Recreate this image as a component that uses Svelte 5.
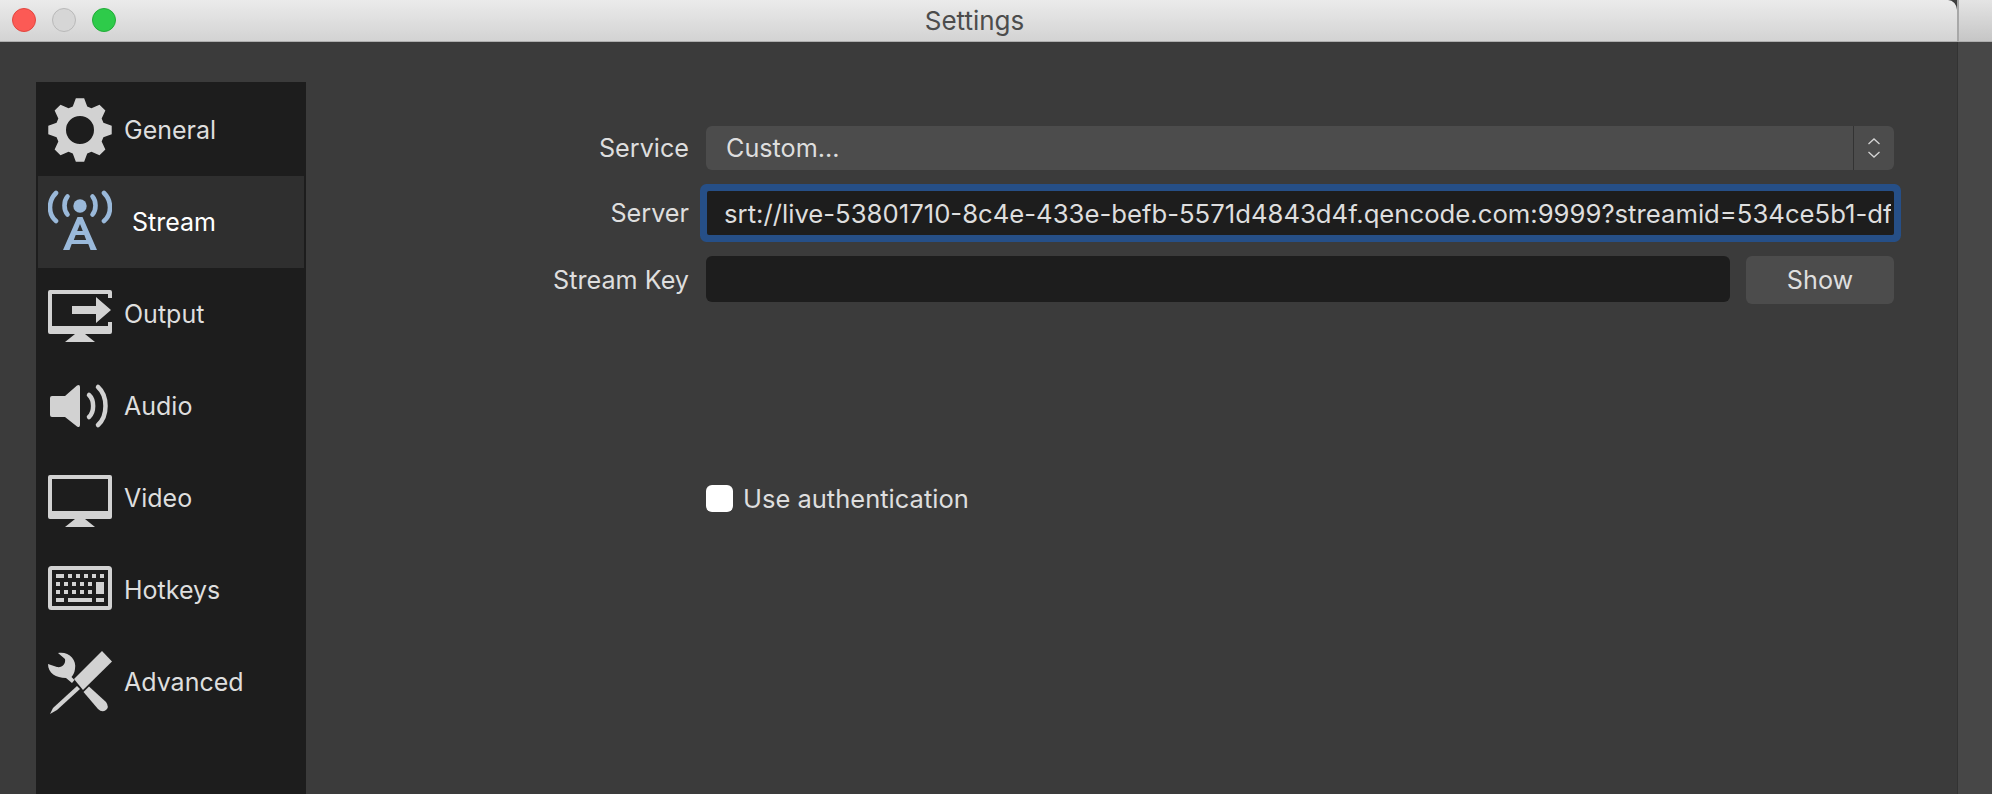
<script>
  const gear = (() => {
    const cx = 32, cy = 32, n = 8, pts = [];
    const pol = (r, a) => `${(cx + r * Math.sin(a)).toFixed(2)} ${(cy - r * Math.cos(a)).toFixed(2)}`;
    for (let i = 0; i < n; i++) {
      const a = (i * Math.PI * 2) / n;
      pts.push(pol(24.5, a - 0.3), pol(32, a - 0.13), pol(32, a + 0.13), pol(24.5, a + 0.3));
    }
    return 'M' + pts.join('L') + 'Z M46 32 A14 14 0 1 0 18 32 A14 14 0 1 0 46 32 Z';
  })();
  const keyRows = [
    [[8,16,8],[20,16,4],[28,16,4],[36,16,4],[44,16,4],[52,16,4]],
    [[8,24,4],[16,24,4],[24,24,4],[32,24,4],[40,24,4]],
    [[8,32,4],[16,32,4],[24,32,4],[32,32,4],[40,32,4]],
    [[8,40,8],[20,40,24],[48,40,8]]
  ].flat();
</script>

<div class="screen">
  <div class="window">
    <header class="titlebar">
      <div class="lights">
        <span class="light red"></span>
        <span class="light grey"></span>
        <span class="light green"></span>
      </div>
      <div class="title">Settings</div>
    </header>
    <div class="body">
      <nav class="sidebar">
        <div class="item">
          <svg viewBox="0 0 64 64" class="icon"><path fill-rule="evenodd" d={gear} /></svg>
          <span>General</span>
        </div>
        <div class="item active">
          <svg viewBox="0 0 64 64" class="icon stream">
            <circle cx="32" cy="16" r="6.7" />
            <g fill="none" stroke-width="4.6" stroke-linecap="round">
              <path d="M19.5 6.5C15.5 11 15.5 20 19.5 24.5" />
              <path d="M44.5 6.5C48.5 11 48.5 20 44.5 24.5" />
              <path d="M8 3C0 11 0 24 8 31" />
              <path d="M56 3C64 11 64 24 56 31" />
            </g>
            <path fill-rule="evenodd" d="M29.5 27H34.5L49 60H42.5L40.3 54H23.7L21.5 60H15ZM32 34L29.2 41H34.8ZM27.7 45L25.8 50H38.2L36.3 45Z" />
          </svg>
          <span class="active-label">Stream</span>
        </div>
        <div class="item">
          <svg viewBox="0 0 64 64" class="icon">
            <path fill-rule="evenodd" d="M2 8H62A2 2 0 0 1 64 10V50A2 2 0 0 1 62 52H37L47 60H17L27 52H2A2 2 0 0 1 0 50V10A2 2 0 0 1 2 8ZM4 12V44H60V12Z" />
            <rect class="cut" x="58" y="16" width="8" height="24" />
            <path d="M24 24H48V15L63 28L48 41V32H24Z" />
          </svg>
          <span>Output</span>
        </div>
        <div class="item">
          <svg viewBox="0 0 64 64" class="icon">
            <path d="M4 22H17L29 11.500Q32 10 32 13V51Q32 54 29 52.500L17 43H4Q2 43 2 41V24Q2 22 4 22Z" />
            <path d="M41 21C46.500 26 46.500 38 41 43" fill="none" stroke-width="4.500" stroke-linecap="round" />
            <path d="M50 13C60 22 60 42 50 51" fill="none" stroke-width="4.500" stroke-linecap="round" />
          </svg>
          <span>Audio</span>
        </div>
        <div class="item">
          <svg viewBox="0 0 64 64" class="icon">
            <path fill-rule="evenodd" d="M2 9H62A2 2 0 0 1 64 11V51A2 2 0 0 1 62 53H37L47 61H17L27 53H2A2 2 0 0 1 0 51V11A2 2 0 0 1 2 9ZM4 13V45H60V13Z" />
          </svg>
          <span>Video</span>
        </div>
        <div class="item">
          <svg viewBox="0 0 64 64" class="icon">
            <rect x="2" y="10" width="60" height="40" rx="1.500" fill="none" stroke-width="4" />
            {#each keyRows as k}
              <rect x={k[0]} y={k[1]} width={k[2]} height="4" />
            {/each}
            <rect x="48" y="24" width="8" height="12" />
          </svg>
          <span>Hotkeys</span>
        </div>
        <div class="item">
          <svg viewBox="0 0 64 64" class="icon">
            <path d="M10 3C20 1 29 9 27 19C26.500 23 25 25 23.500 27L26.500 30L24 33L18 28C8 28 0 23 0 14L9 17C14 18 18 14 17 9Z" />
            <path d="M54 1L64 11.500L35 40L26 29Z" />
            <path d="M29 36L32 39L9 60L2 64L5 58Z" />
            <path d="M35.500 42L41 36.500L58 52Q61.500 57 58 60Q54 63 50 59Z" />
          </svg>
          <span>Advanced</span>
        </div>
      </nav>

      <section class="form">
        <label class="lbl" for="service">Service</label>
        <div class="combo" id="service">
          <span class="combo-text">Custom...</span>
          <span class="combo-arrows">
            <svg viewBox="0 0 14 24" width="14" height="24">
              <path d="M1.500 8L7 3L12.500 8M1.500 16L7 21L12.500 16" fill="none" stroke="#d4d4d4" stroke-width="1.300" />
            </svg>
          </span>
        </div>

        <label class="lbl server-lbl" for="server">Server</label>
        <div class="input focused" id="server">
          <span class="url">srt://live-53801710-8c4e-433e-befb-5571d4843d4f.qencode.com:9999?streamid=534ce5b1-df</span>
        </div>

        <label class="lbl key-lbl" for="key">Stream Key</label>
        <div class="key-row">
          <div class="input key" id="key"></div>
          <div class="btn">Show</div>
        </div>

        <div class="check-row">
          <span class="check"></span>
          <span>Use authentication</span>
        </div>
      </section>
    </div>
  </div>
  <div class="behind">
    <div class="behind-top"></div>
  </div>
</div>

<style>
  :global(body) {
    margin: 0;
    background: #3f3f3f;
  }
  .screen {
    display: flex;
    width: 1992px;
    height: 794px;
    overflow: hidden;
    font-family: Inter, "Liberation Sans", sans-serif;
    font-size: 25.2px;
    color: #dedede;
  }
  .window {
    width: 1958px;
    display: flex;
    flex-direction: column;
    background: #3b3b3b;
    border-right: 1px solid #333;
    border-top-right-radius: 10px;
    overflow: hidden;
    flex: none;
    box-sizing: border-box;
  }
  .titlebar {
    height: 42px;
    flex: none;
    box-sizing: border-box;
    display: flex;
    align-items: center;
    justify-content: center;
    position: relative;
    background: linear-gradient(#ebebeb, #d3d3d3);
    border-bottom: 1px solid #aeaeae;
  }
  .title {
    color: #4c4c4c;
    font-size: 26px;
    margin-right: 8px;
  }
  .lights {
    position: absolute;
    left: 12px;
    top: 8px;
    display: flex;
    gap: 16px;
  }
  .light {
    width: 24px;
    height: 24px;
    border-radius: 50%;
    box-sizing: border-box;
    border: 1px solid transparent;
  }
  .red { background: #fc5a55; border-color: #e2463f; }
  .grey { background: #d6d6d6; border-color: #b9b9b9; }
  .green { background: #2ecb4a; border-color: #22ac38; }
  .body {
    flex: 1;
    display: flex;
    min-height: 0;
  }
  .sidebar {
    width: 270px;
    margin: 40px 0 0 36px;
    background: #1d1d1d;
    padding: 2px;
    box-sizing: border-box;
    flex: none;
    display: flex;
    flex-direction: column;
    font-size: 25px;
  }
  .item {
    height: 92px;
    padding-left: 10px;
    display: flex;
    align-items: center;
    gap: 12px;
    flex: none;
    line-height: 1;
  }
  .item.active {
    background: #2f2f2f;
    color: #fff;
  }
  .active-label {
    margin-left: 8px;
  }
  .icon {
    width: 64px;
    height: 64px;
    flex: none;
    fill: #d2d2d2;
    stroke: #d2d2d2;
    stroke-width: 0;
  }
  .icon.stream {
    fill: #9ab9da;
    stroke: #9ab9da;
  }
  .icon .cut {
    fill: #1d1d1d;
  }
  .form {
    flex: 1;
    display: grid;
    grid-template-columns: 1fr 1188px;
    grid-template-rows: 44px 44px 48px;
    row-gap: 21px;
    column-gap: 17px;
    padding: 84px 63px 0 0;
    align-content: start;
    min-width: 0;
  }
  .lbl {
    text-align: right;
    align-self: center;
  }
  .combo {
    background: #4c4c4c;
    border-radius: 6px;
    display: flex;
    align-items: center;
    overflow: hidden;
  }
  .combo-text {
    flex: 1;
    padding-left: 20px;
  }
  .combo-arrows {
    width: 40px;
    height: 100%;
    border-left: 1px solid #333;
    display: flex;
    align-items: center;
    justify-content: center;
  }
  .input {
    background: #1d1d1d;
    border-radius: 3px;
    display: flex;
    align-items: center;
    min-width: 0;
  }
  .focused {
    box-shadow: 0 0 0 7px #264f87;
    padding: 0 3px 0 17px;
    border-radius: 2px;
    margin-left: 1px;
  }
  .url {
    display: block;
    width: 100%;
    overflow: hidden;
    white-space: nowrap;
    font-size: 25.7px;
  }
  .key-row {
    display: flex;
    gap: 16px;
    min-width: 0;
  }
  .key {
    flex: 1;
    height: 46px;
    border-radius: 6px;
  }
  .btn {
    width: 148px;
    flex: none;
    background: #4c4c4c;
    border-radius: 6px;
    display: flex;
    align-items: center;
    justify-content: center;
  }
  .check-row {
    grid-column: 2;
    margin-top: 158px;
    display: flex;
    align-items: center;
    gap: 10px;
    font-size: 25.5px;
  }
  .check {
    width: 27px;
    height: 27px;
    background: #fff;
    border-radius: 6px;
    flex: none;
  }
  .behind {
    flex: 1;
    background: #474747;
  }
  .behind-top {
    height: 42px;
    background: linear-gradient(#e4e4e4, #c6c6c6);
    border-bottom: 1px solid #aeaeae;
    border-left: 2px solid #a8a8a8;
    margin-left: -1px;
    box-sizing: border-box;
  }
</style>
